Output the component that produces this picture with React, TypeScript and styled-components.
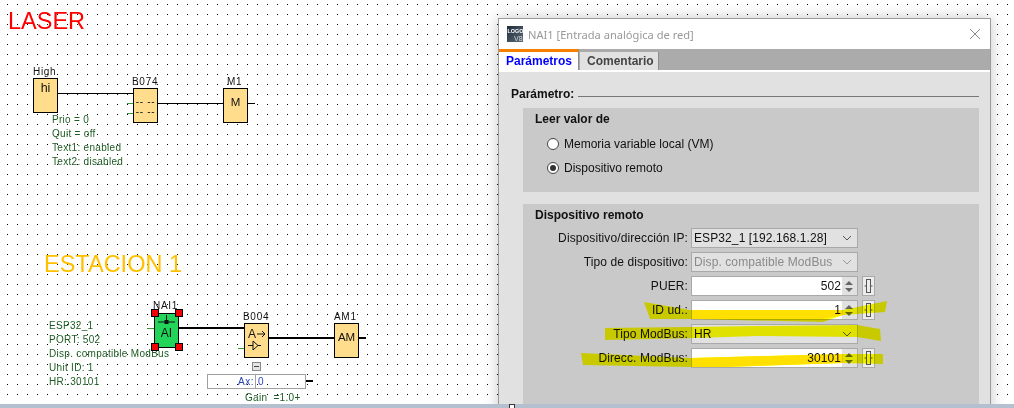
import React from "react";
import styled, { createGlobalStyle } from "styled-components";

const Global = createGlobalStyle`
  html, body { margin: 0; padding: 0; background: #fff; overflow: hidden; }
  body { font-family: "Liberation Sans", Arial, sans-serif; }
`;

const Page = styled.div`
  position: relative;
  width: 1014px;
  height: 408px;
  overflow: hidden;
  display: flex;
  flex-direction: column;
`;

const Canvas = styled.div`
  position: relative;
  flex: 1;
  overflow: hidden;
  background-color: #fff;
  background-image: conic-gradient(at 1px 1px, transparent 75%, #000 0);
  background-size: 10px 10px;
  background-position: 7px 4px;
`;

const StatusEdge = styled.div`
  height: 4px;
  background: #b4bfd0;
  position: relative;
`;

const EdgeHandle = styled.span`
  position: absolute;
  left: 509px;
  top: 0;
  width: 4px;
  height: 4px;
  background: #fff;
  border: 1px solid #333;
  border-bottom: none;
`;

const Heading = styled.div<{ $x: number; $y: number; $color: string }>`
  position: absolute;
  left: ${(p) => p.$x}px;
  top: ${(p) => p.$y}px;
  color: ${(p) => p.$color};
  font-size: 23.5px;
  line-height: 27px;
  white-space: nowrap;
`;

const Block = styled.div<{ $x: number; $y: number; $fill?: string }>`
  position: absolute;
  left: ${(p) => p.$x}px;
  top: ${(p) => p.$y}px;
  width: 25px;
  height: 35px;
  box-sizing: border-box;
  border: 1px solid #000;
  background: ${(p) => p.$fill || "#ffdd8c"};
  color: #111;
  font-size: 12px;
  text-align: center;
  line-height: 16px;
`;

const BlockText = styled.div<{ $pad?: number; $size?: number }>`
  padding-top: ${(p) => p.$pad ?? 5}px;
  font-size: ${(p) => p.$size ?? 11.5}px;
`;

const NetLabel = styled.div`
  margin-top: -6px;
  font-size: 12px;
`;

const DashText = styled.div`
  font-size: 10px;
  line-height: 10px;
  padding-top: 8px;
  white-space: pre;
  letter-spacing: 0.7px;
`;

const BlockName = styled.div<{ $x: number; $y: number }>`
  position: absolute;
  left: ${(p) => p.$x}px;
  top: ${(p) => p.$y}px;
  font-size: 10px;
  line-height: 12px;
  letter-spacing: 0.7px;
  color: #111;
  white-space: nowrap;
`;

const Wire = styled.div<{ $x: number; $y: number; $w: number; $thick?: boolean; $green?: boolean }>`
  position: absolute;
  left: ${(p) => p.$x}px;
  top: ${(p) => p.$y}px;
  width: ${(p) => p.$w}px;
  height: ${(p) => (p.$thick ? 2 : 1)}px;
  background: ${(p) => (p.$green ? "#3a9a3a" : "#000")};
`;

const Notes = styled.div<{ $x: number; $y: number }>`
  position: absolute;
  left: ${(p) => p.$x}px;
  top: ${(p) => p.$y}px;
  display: flex;
  flex-direction: column;
  color: #1d5c22;
  font-size: 10px;
  line-height: 14px;
  letter-spacing: 0.3px;
  white-space: pre;
`;

const Handle = styled.span<{ $x: number; $y: number }>`
  position: absolute;
  left: ${(p) => p.$x}px;
  top: ${(p) => p.$y}px;
  width: 8px;
  height: 8px;
  box-sizing: border-box;
  background: #f00000;
  border: 1px solid #000;
`;

const Collapse = styled.div`
  position: absolute;
  left: 252px;
  top: 362px;
  width: 9px;
  height: 9px;
  box-sizing: border-box;
  border: 1px solid #888;
  background: #e4e4e4;
  display: flex;
  align-items: center;
  justify-content: center;
  &::after {
    content: "";
    width: 5px;
    height: 1px;
    background: #444;
  }
`;

const ParamBox = styled.div`
  position: absolute;
  left: 207px;
  top: 374px;
  width: 99px;
  height: 15px;
  box-sizing: border-box;
  border: 1px solid #a0a0a0;
  display: grid;
  grid-template-columns: 48px 1fr;
  color: #2a46b8;
  font-size: 10px;
  line-height: 13px;
  letter-spacing: 0.5px;
`;

const ParamKey = styled.div`
  border-right: 1px solid #a0a0a0;
  text-align: right;
  padding-right: 1px;
`;

const ParamValue = styled.div`
  padding-left: 2px;
`;

const Dialog = styled.div`
  position: absolute;
  left: 498px;
  top: 18px;
  width: 493px;
  height: 400px;
  box-sizing: border-box;
  border: 1px solid #9a9a9a;
  background: #e1e1e1;
  box-shadow: 0 0 14px rgba(0, 0, 0, 0.22);
  display: flex;
  flex-direction: column;
`;

const TitleBar = styled.div`
  flex: none;
  height: 30px;
  background: #fff;
  display: flex;
  align-items: center;
  padding: 0 9px 0 8px;
  gap: 5px;
  color: #999;
  font-family: "Noto Sans", sans-serif;
  font-size: 11.1px;
`;

const TitleText = styled.div`
  flex: 1;
  white-space: nowrap;
`;

const TabStrip = styled.div`
  flex: none;
  height: 21px;
  background: #ababab;
  display: flex;
  align-items: flex-end;
  gap: 1px;
  font-size: 12px;
  font-weight: bold;
  border-bottom: 2px solid #fff;
`;

const Tab = styled.div<{ $active?: boolean }>`
  box-sizing: border-box;
  height: ${(p) => (p.$active ? 21 : 18)}px;
  width: ${(p) => (p.$active ? 80 : 79)}px;
  background: ${(p) => (p.$active ? "#fff" : "#e1e1e1")};
  border-top: ${(p) => (p.$active ? "3px solid #f77f00" : "none")};
  border-right: 1px solid #8c8c8c;
  color: ${(p) => (p.$active ? "#0000ff" : "#444")};
  padding-left: 7px;
  line-height: 18px;
`;

const Body = styled.div`
  flex: none;
  padding: 15px 11px 0 24px;
  position: relative;
  display: flex;
  flex-direction: column;
`;

const SectionHead = styled.div`
  display: flex;
  align-items: center;
  gap: 4px;
  margin-left: -12px;
  font-size: 12px;
  font-weight: bold;
  color: #111;
  height: 14px;
  margin-bottom: 7px;
`;

const SectionRule = styled.div`
  flex: 1;
  height: 1px;
  background: #777;
  margin-top: 5px;
`;

const Panel = styled.div<{ $h: number }>`
  flex: none;
  background: #c9c9c9;
  height: ${(p) => p.$h}px;
  margin-bottom: 12px;
  padding-left: 12px;
  box-sizing: border-box;
`;

const PanelTitle = styled.div`
  font-size: 12px;
  font-weight: bold;
  color: #111;
  line-height: 14px;
  padding-top: 4px;
`;

const RadioRow = styled.div`
  display: flex;
  align-items: center;
  gap: 5px;
  margin-left: 12px;
  height: 14px;
  margin-top: 10px;
  font-size: 12px;
  color: #111;
`;

const RadioFirst = styled(RadioRow)`
  margin-top: 11px;
`;

const RadioDot = styled.span<{ $on?: boolean }>`
  width: 12px;
  height: 12px;
  box-sizing: border-box;
  border-radius: 50%;
  border: 1px solid #444;
  background: #fff;
  display: flex;
  align-items: center;
  justify-content: center;
  &::after {
    content: "";
    display: ${(p) => (p.$on ? "block" : "none")};
    width: 6px;
    height: 6px;
    border-radius: 50%;
    background: #333;
  }
`;

const Rows = styled.div`
  display: flex;
  flex-direction: column;
  gap: 4px;
  margin-top: 6px;
`;

const Row = styled.div`
  display: flex;
  align-items: center;
  height: 20px;
  font-size: 12px;
  letter-spacing: 0.1px;
  color: #111;
`;

const RowLabel = styled.div`
  width: 153px;
  text-align: right;
  white-space: nowrap;
  flex: none;
  margin-right: 3px;
`;

const Select = styled.div<{ $off?: boolean }>`
  width: 167px;
  height: 20px;
  box-sizing: border-box;
  border: 1px solid #a9a9a9;
  background: #e1e1e1;
  color: ${(p) => (p.$off ? "#8a8a8a" : "#111")};
  display: flex;
  align-items: center;
  justify-content: space-between;
  padding: 0 5px 0 2px;
  white-space: nowrap;
`;

const NumField = styled.div`
  width: 167px;
  height: 20px;
  box-sizing: border-box;
  border: 1px solid #a9a9a9;
  background: #e1e1e1;
  display: flex;
  align-items: stretch;
`;

const NumValue = styled.div`
  flex: 1;
  background: #fff;
  text-align: right;
  line-height: 18px;
  padding-right: 1px;
`;

const Spin = styled.div`
  width: 13px;
  flex: none;
  display: flex;
  flex-direction: column;
  align-items: center;
  justify-content: center;
  gap: 3px;
  padding-right: 2px;
`;

const SpinUp = styled.span`
  width: 0;
  height: 0;
  border-left: 4px solid transparent;
  border-right: 4px solid transparent;
  border-bottom: 4px solid #666;
`;

const SpinDown = styled(SpinUp)`
  border-bottom: none;
  border-top: 4px solid #666;
`;

const LinkBtn = styled.div`
  width: 13px;
  height: 20px;
  box-sizing: border-box;
  margin-left: 4px;
  border: 1px solid #a9a9a9;
  background: #ececec;
  display: flex;
  align-items: center;
  justify-content: center;
`;

const Marker = styled.svg`
  position: absolute;
  left: 0;
  top: 0;
  width: 1014px;
  height: 408px;
  pointer-events: none;
  mix-blend-mode: multiply;
`;

const Chevron = ({ c = "#555" }: { c?: string }) => (
  <svg width="10" height="6" viewBox="0 0 10 6" fill="none">
    <path d="M1 1l4 4 4-4" stroke={c} strokeWidth="1" />
  </svg>
);

const LinkIcon = () => (
  <svg width="9" height="16" viewBox="0 0 9 16" fill="none">
    <rect x="2.5" y="1.5" width="4" height="13" stroke="#555" />
    <path d="M0.5 8H2M7 8h1.5" stroke="#555" />
  </svg>
);

const Logo = () => (
  <svg width="16" height="16" viewBox="0 0 16 16">
    <defs>
      <linearGradient id="lg" x1="0" y1="0" x2="1" y2="1">
        <stop offset="0" stopColor="#1f2c3a" />
        <stop offset="1" stopColor="#5d6b78" />
      </linearGradient>
    </defs>
    <rect width="16" height="16" fill="url(#lg)" />
    <text x="0.5" y="6.5" fontSize="5.4" fill="#fff" fontFamily="Liberation Sans" fontWeight="bold">LOGO</text>
    <text x="7" y="14.5" fontSize="7" fill="#cfd6dc" fontFamily="Liberation Sans">V8</text>
  </svg>
);

const CloseIcon = () => (
  <svg width="12" height="12" viewBox="0 0 12 12" fill="none">
    <path d="M1 1l10 10M11 1L1 11" stroke="#8a8a8a" strokeWidth="1" />
  </svg>
);

const GainIcon = () => (
  <svg width="23" height="33" viewBox="0 0 23 33" fill="none" stroke="#111" strokeWidth="1">
    <path d="M12 10h8M17 7l3 3-3 3" />
    <path d="M8 21.5H3M8 17v9l5-4.5zM13 21.5h3" />
    <text x="3" y="14" fontSize="12" fill="#111" stroke="none" fontFamily="Liberation Sans">A</text>
  </svg>
);

const NetIcon = () => (
  <svg width="23" height="13" viewBox="0 0 23 13" fill="none">
    <path d="M11.5 1v9M3 8h17" stroke="#111" />
    <rect x="9.5" y="6" width="4" height="4" fill="#111" />
  </svg>
);

const noteLaser = ["Prio = 0", "Quit = off", "Text1: enabled", "Text2: disabled"];
const noteEsp = ["ESP32_1", "PORT: 502", "Disp. compatible ModBus", "Unit ID: 1", "HR:.30101"];

export default function App() {
  return (
    <Page>
      <Global />
      <Canvas>
        <Heading $x={8} $y={8} $color="#ff0000">LASER</Heading>
        <BlockName $x={33} $y={66}>High</BlockName>
        <Block $x={33} $y={78}><BlockText $pad={1} $size={12.5}>hi</BlockText></Block>
        <Wire $x={58} $y={93} $w={75} />
        <Wire $x={127} $y={103} $w={6} $green />
        <Wire $x={127} $y={113} $w={6} $green />
        <BlockName $x={132} $y={76}>B074</BlockName>
        <Block $x={133} $y={88}><DashText>{"-- --\n-- --"}</DashText></Block>
        <Wire $x={158} $y={103} $w={65} />
        <BlockName $x={227} $y={76}>M1</BlockName>
        <Block $x={223} $y={88}><BlockText>M</BlockText></Block>
        <Wire $x={248} $y={103} $w={7} />
        <Notes $x={52} $y={113}>
          {noteLaser.map((t) => <div key={t}>{t}</div>)}
        </Notes>

        <Heading $x={44} $y={251} $color="#ffc000">ESTACION 1</Heading>
        <Notes $x={49} $y={319}>
          {noteEsp.map((t) => <div key={t}>{t}</div>)}
        </Notes>
        <BlockName $x={153} $y={300}>NAI1</BlockName>
        <Wire $x={147} $y={328} $w={7} $green />
        <Block $x={154} $y={313} $fill="#22d45a">
          <NetIcon />
          <NetLabel>AI</NetLabel>
        </Block>
        <Handle $x={151} $y={309} />
        <Handle $x={175} $y={309} />
        <Handle $x={151} $y={343} />
        <Handle $x={175} $y={343} />
        <Wire $x={179} $y={327} $w={65} $thick />
        <Wire $x={238} $y={348} $w={6} $green />
        <BlockName $x={243} $y={311}>B004</BlockName>
        <Block $x={244} $y={323}><GainIcon /></Block>
        <Wire $x={269} $y={337} $w={65} $thick />
        <BlockName $x={334} $y={311}>AM1</BlockName>
        <Block $x={334} $y={323}><BlockText>AM</BlockText></Block>
        <Wire $x={359} $y={337} $w={7} $thick />
        <Collapse />
        <ParamBox>
          <ParamKey>Ax:</ParamKey>
          <ParamValue>0</ParamValue>
        </ParamBox>
        <Wire $x={306} $y={380} $w={7} $thick />
        <Notes $x={245} $y={391}><div>Gain  =1.0+</div></Notes>

        <Dialog>
          <TitleBar>
            <Logo />
            <TitleText>NAI1 [Entrada analógica de red]</TitleText>
            <CloseIcon />
          </TitleBar>
          <TabStrip>
            <Tab $active>Parámetros</Tab>
            <Tab>Comentario</Tab>
          </TabStrip>
          <Body>
            <SectionHead>
              Parámetro:
              <SectionRule />
            </SectionHead>
            <Panel $h={84}>
              <PanelTitle>Leer valor de</PanelTitle>
              <RadioFirst><RadioDot />Memoria variable local (VM)</RadioFirst>
              <RadioRow><RadioDot $on />Dispositivo remoto</RadioRow>
            </Panel>
            <Panel $h={210}>
              <PanelTitle>Dispositivo remoto</PanelTitle>
              <Rows>
                <Row>
                  <RowLabel>Dispositivo/dirección IP:</RowLabel>
                  <Select>ESP32_1 [192.168.1.28]<Chevron /></Select>
                </Row>
                <Row>
                  <RowLabel>Tipo de dispositivo:</RowLabel>
                  <Select $off>Disp. compatible ModBus<Chevron c="#999" /></Select>
                </Row>
                <Row>
                  <RowLabel>PUER:</RowLabel>
                  <NumField><NumValue>502</NumValue><Spin><SpinUp /><SpinDown /></Spin></NumField>
                  <LinkBtn><LinkIcon /></LinkBtn>
                </Row>
                <Row>
                  <RowLabel>ID ud.:</RowLabel>
                  <NumField><NumValue>1</NumValue><Spin><SpinUp /><SpinDown /></Spin></NumField>
                  <LinkBtn><LinkIcon /></LinkBtn>
                </Row>
                <Row>
                  <RowLabel>Tipo ModBus:</RowLabel>
                  <Select>HR<Chevron /></Select>
                </Row>
                <Row>
                  <RowLabel>Direcc. ModBus:</RowLabel>
                  <NumField><NumValue>30101</NumValue><Spin><SpinUp /><SpinDown /></Spin></NumField>
                  <LinkBtn><LinkIcon /></LinkBtn>
                </Row>
              </Rows>
            </Panel>
          </Body>
        </Dialog>
      </Canvas>
      <StatusEdge><EdgeHandle /></StatusEdge>
      <Marker viewBox="0 0 1014 408">
        <path fill="#ffff00" d="M644 302L690 310H843L887 301L885 312L843 315L823 322L690 319L650 319Z" />
        <path fill="#ffff00" d="M605 328L690 327L757 326L857 325L880 329L881 341L857 337L757 336L697 338L605 340Z" />
        <path fill="#ffff00" d="M581 353L690 358L843 354L883 354L883 364L843 363L723 367L690 367L583 365Z" />
        <path fill="#ffe000" d="M692 310H843V315L823 319H692Z" />
        <path fill="#ffe000" d="M692 358L843 354V363L723 367H692Z" />
      </Marker>
    </Page>
  );
}
